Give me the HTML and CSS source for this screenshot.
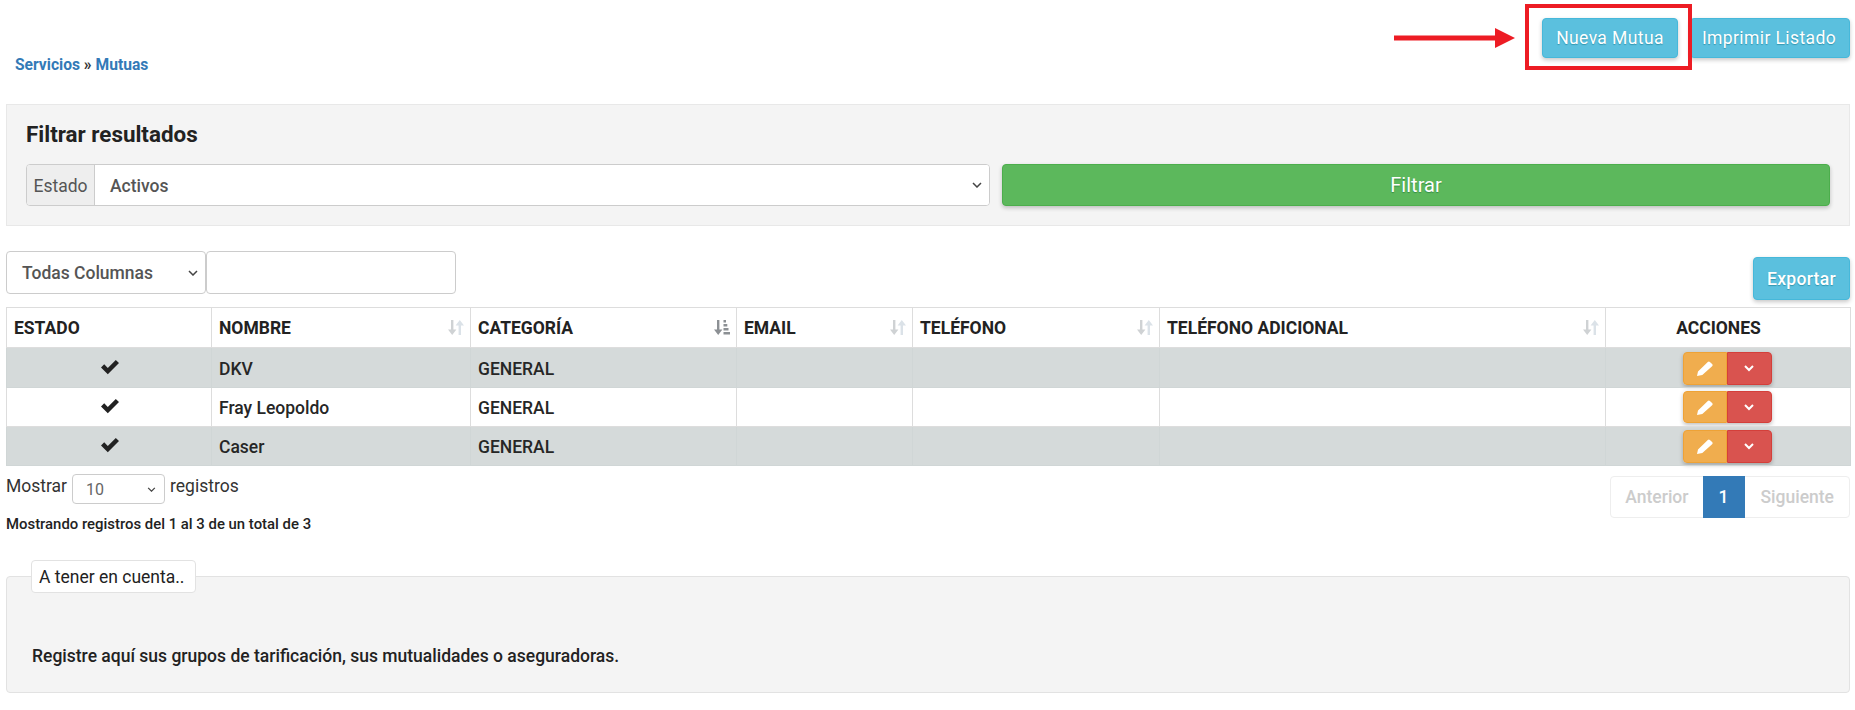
FILE: index.html
```html
<!DOCTYPE html>
<html lang="es">
<head>
<meta charset="utf-8">
<title>Mutuas</title>
<link rel="stylesheet" href="styles.css">
</head>
<body>
<svg class="defs" width="0" height="0">
  <symbol id="sort" viewBox="0 0 16 15"><path d="M3 0h2.400v9.500h3L4.200 15 0 9.500h3Z" fill="#cfd2d4"/><path d="M10.600 15h2.400V5.500h3L11.800 0 7.600 5.500h3Z" fill="#dbe2e8"/></symbol>
  <symbol id="sorted" viewBox="0 0 16 15"><path d="M3 0h2.400v9.500h3L4.200 15 0 9.500h3Z" fill="#8c9094"/><path d="M9.500 0h2.500v2.500H9.500ZM9.500 4h3.800v2.500H9.500ZM9.500 8h5v2.500H9.500ZM9.500 12h6.500v2.500H9.500Z" fill="#8c9094"/></symbol>
  <symbol id="check" viewBox="0 0 18 16"><path d="M0 8.500L3.200 5.300 6.800 8.900 14.800 .9 18 4.100 6.800 15.300Z" fill="#222"/></symbol>
  <symbol id="pencil" viewBox="0 0 16 15"><path d="M0 15l1-4.500L10.800 1a1.500 1.500 0 0 1 2.100 0l2.200 2.100a1.500 1.500 0 0 1 0 2.100L5.300 14Z" fill="#fff"/></symbol>
  <symbol id="down" viewBox="0 0 10 7"><path d="M1 1l4 4 4-4" fill="none" stroke="#fff" stroke-width="2"/></symbol>
  <symbol id="chev" viewBox="0 0 10 6"><path d="M1 1l4 4 4-4" fill="none" stroke="#444" stroke-width="1.500"/></symbol>
</svg>

<header class="top">
  <nav class="crumbs"><a>Servicios</a> » <a>Mutuas</a></nav>
  <div class="top-actions">
    <svg class="arrow" width="121" height="20" viewBox="0 0 121 20"><path d="M0 7.500H101V0L121 10 101 20V12.500H0Z" fill="#ed1c24"/></svg>
    <div class="highlight"><button class="btn info new">Nueva Mutua</button></div>
    <button class="btn info print">Imprimir Listado</button>
  </div>
</header>

<section class="filter">
  <h3>Filtrar resultados</h3>
  <div class="filter-row">
    <div class="group">
      <span class="addon">Estado</span>
      <div class="sel grow">Activos<svg class="chev"><use href="#chev"/></svg></div>
    </div>
    <button class="btn success">Filtrar</button>
  </div>
</section>

<div class="tools">
  <div class="search">
    <div class="sel cols">Todas Columnas<svg class="chev"><use href="#chev"/></svg></div>
    <div class="box"></div>
  </div>
  <button class="btn info export">Exportar</button>
</div>

<table>
  <colgroup>
    <col class="c1"><col class="c2"><col class="c3"><col class="c4"><col class="c5"><col class="c6"><col class="c7">
  </colgroup>
  <thead>
    <tr>
      <th>ESTADO</th>
      <th><div class="th">NOMBRE<svg class="sort"><use href="#sort"/></svg></div></th>
      <th><div class="th">CATEGORÍA<svg class="sort"><use href="#sorted"/></svg></div></th>
      <th><div class="th">EMAIL<svg class="sort"><use href="#sort"/></svg></div></th>
      <th><div class="th">TELÉFONO<svg class="sort"><use href="#sort"/></svg></div></th>
      <th><div class="th">TELÉFONO ADICIONAL<svg class="sort"><use href="#sort"/></svg></div></th>
      <th class="center acts-head">ACCIONES</th>
    </tr>
  </thead>
  <tbody>
    <tr class="odd first">
      <td class="center mark"><svg class="check"><use href="#check"/></svg></td>
      <td>DKV</td><td>GENERAL</td><td></td><td></td><td></td>
      <td class="center acts-cell"><div class="acts"><span class="act warn"><svg class="pencil"><use href="#pencil"/></svg></span><span class="act danger"><svg class="down"><use href="#down"/></svg></span></div></td>
    </tr>
    <tr class="second">
      <td class="center mark"><svg class="check"><use href="#check"/></svg></td>
      <td>Fray Leopoldo</td><td>GENERAL</td><td></td><td></td><td></td>
      <td class="center acts-cell"><div class="acts"><span class="act warn"><svg class="pencil"><use href="#pencil"/></svg></span><span class="act danger"><svg class="down"><use href="#down"/></svg></span></div></td>
    </tr>
    <tr class="odd">
      <td class="center mark"><svg class="check"><use href="#check"/></svg></td>
      <td>Caser</td><td>GENERAL</td><td></td><td></td><td></td>
      <td class="center acts-cell"><div class="acts"><span class="act warn"><svg class="pencil"><use href="#pencil"/></svg></span><span class="act danger"><svg class="down"><use href="#down"/></svg></span></div></td>
    </tr>
  </tbody>
</table>

<div class="below">
  <div>
    <div class="length">Mostrar <div class="sel mini">10<svg class="chev small"><use href="#chev"/></svg></div> registros</div>
    <p class="info-line">Mostrando registros del 1 al 3 de un total de 3</p>
  </div>
  <div class="pager"><span class="pg prev">Anterior</span><span class="pg current">1</span><span class="pg next">Siguiente</span></div>
</div>

<section class="note">
  <div class="legend">A tener en cuenta..</div>
  <p>Registre aquí sus grupos de tarificación, sus mutualidades o aseguradoras.</p>
</section>
</body>
</html>
```

FILE: styles.css
```css
* { box-sizing: border-box; }
html, body { margin: 0; padding: 0; }
body {
  background: #fff;
  color: #222;
  font-family: Roboto, "Liberation Sans", sans-serif;
  font-size: 17.5px;
  padding: 0 5px 0 6px;
  height: 710px;
  overflow: hidden;
}
.defs { display: block; height: 0; }
.top { display: flex; justify-content: space-between; height: 104px; }
.crumbs { margin: 56px 0 0 9px; font-size: 15.6px; font-weight: 700; color: #333; line-height: 18px; }
.crumbs a { color: #337ab7; }
.top-actions { display: flex; align-items: flex-start; }
.arrow { margin: 28px 10px 0 0; }
.highlight {
  position: relative;
  z-index: 1;
  width: 167px; height: 66px; margin: 4px -2px 0 0;
  border: 4px solid #ed1c24;
  padding: 10px 0 0 13px;
}
.btn {
  border: 1px solid #46b8da;
  border-radius: 4px;
  color: #fff;
  font-family: inherit;
  font-size: 17.5px;
  line-height: 22px;
  padding: 0;
  box-shadow: 0 2px 4px rgba(0,0,0,.22);
  text-shadow: 0 1px 1px rgba(0,100,120,.45);
}
.info { background: #5bc0de; height: 40px; }
.new { width: 136px; letter-spacing: .4px; }
.print { width: 160px; margin-top: 18px; padding-right: 2px; letter-spacing: .4px; }
.filter {
  background: #f4f4f4;
  border: 1px solid #e8e8e8;
  height: 122px;
  padding: 15px 19px 0;
}
.filter h3 { margin: 0 0 15px; font-size: 22.4px; line-height: 29px; font-weight: 700; color: #222; }
.filter-row { display: flex; gap: 12px; }
.group { display: flex; width: 964px; height: 42px; border: 1px solid #ccc; border-radius: 4px; overflow: hidden; background: #fff; }
.addon { width: 68px; padding-top: 1px; background: #eee; border-right: 1px solid #ccc; color: #555; display: flex; align-items: center; justify-content: center; }
.sel { position: relative; color: #444; display: flex; align-items: center; background: #fff; }
.grow { flex: 1; padding: 1px 0 0 15px; font-weight: 500; color: #555; }
.chev { position: absolute; right: 7px; top: 50%; margin-top: -3px; width: 10px; height: 6px; }
.chev.small { width: 9px; height: 5px; right: 8px; margin-top: -2px; }
.success { background: #5cb85c; border-color: #4cae4c; height: 42px; width: 828px; font-size: 20px; text-shadow: 0 1px 1px rgba(0,90,40,.45); }
.tools { display: flex; justify-content: space-between; margin-top: 25px; height: 56px; }
.search { display: flex; height: 43px; }
.cols { width: 200px; height: 43px; border: 1px solid #ccc; border-radius: 4px; padding-left: 15px; font-weight: 500; color: #555; }
.box { width: 250px; height: 43px; border: 1px solid #ccc; border-radius: 4px; }
.export { width: 97px; height: 43px; margin-top: 6px; font-weight: 500; letter-spacing: .3px; }
table { border-collapse: collapse; table-layout: fixed; width: 1844px; }
.c1 { width: 205px; } .c2 { width: 259px; } .c3 { width: 266px; } .c4 { width: 176px; } .c5 { width: 247px; } .c6 { width: 446px; } .c7 { width: 245px; }
th, td { border: 1px solid #ddd; padding: 0 7px; text-align: left; }
thead tr { height: 40px; }
th { font-weight: 700; color: #222; }
.th { display: flex; justify-content: space-between; align-items: center; margin-right: -1px; }
.sort { width: 16px; height: 15px; }
.acts-head { padding-right: 26px; }
tbody td { font-weight: 500; color: #262626; padding-top: 2px; }
tbody tr { height: 39px; }
tbody tr.first { height: 40px; }
tbody tr.first td { padding-top: 3px; }
tbody tr.odd { background: #d5dada; }
tbody tr.odd td { border-color: #d0d6d6; }
.center { text-align: center; }
.mark { padding-left: 9px; }
.check { display: block; width: 18px; height: 16px; margin: -5px auto 0; }
.pencil { width: 16px; height: 15px; }
.down { width: 10px; height: 7px; }
tbody td.acts-cell { padding: 0 9px 0 7px; }
tbody tr.first td.acts-cell { padding-top: 2px; }
.acts { display: flex; width: 89px; margin: 0 auto; border-radius: 4px; box-shadow: 0 2px 4px rgba(0,0,0,.25); }
.act { height: 33px; display: flex; align-items: center; justify-content: center; border: 1px solid; }
.second .act { height: 32px; }
.warn { width: 44px; background: #f0ad4e; border-color: #eea236; border-radius: 4px 0 0 4px; }
.danger { width: 45px; background: #d9534f; border-color: #d43f3a; border-radius: 0 4px 4px 0; }
.below { display: flex; justify-content: space-between; }
.length { display: flex; align-items: flex-start; gap: 5px; margin-top: 6px; height: 32px; line-height: 29px; color: #333; }
.mini { width: 93px; height: 30px; margin-top: 2px; border: 1px solid #ccc; border-radius: 4px; padding-left: 13px; font-size: 16px; font-weight: 400; color: #666; }
.info-line { margin: 11px 0 0; font-size: 14.9px; line-height: 18px; font-weight: 500; color: #222; }
.pager { display: flex; height: 42px; margin-top: 10px; border: 1px solid #eee; border-radius: 4px; }
.pg { display: flex; align-items: center; color: #ccc; font-weight: 500; }
.prev { padding: 0 14px; }
.next { padding: 0 15px 0 16px; }
.current { background: #337ab7; color: #fff; width: 42px; justify-content: center; margin: -1px 0; }
.note {
  position: relative;
  background: #f4f4f4;
  border: 1px solid #e2e2e2;
  border-radius: 4px;
  height: 117px;
  margin-top: 43px;
  padding: 67px 25px 0;
}
.note p { margin: 0; font-weight: 500; color: #222; line-height: 24px; }
.legend {
  position: absolute; left: 24px; top: -17px;
  background: #fff; border: 1px solid #e2e2e2; border-radius: 4px;
  height: 33px; padding: 0 10px 0 7px;
  display: flex; align-items: center;
  white-space: nowrap; color: #222;
}
```
